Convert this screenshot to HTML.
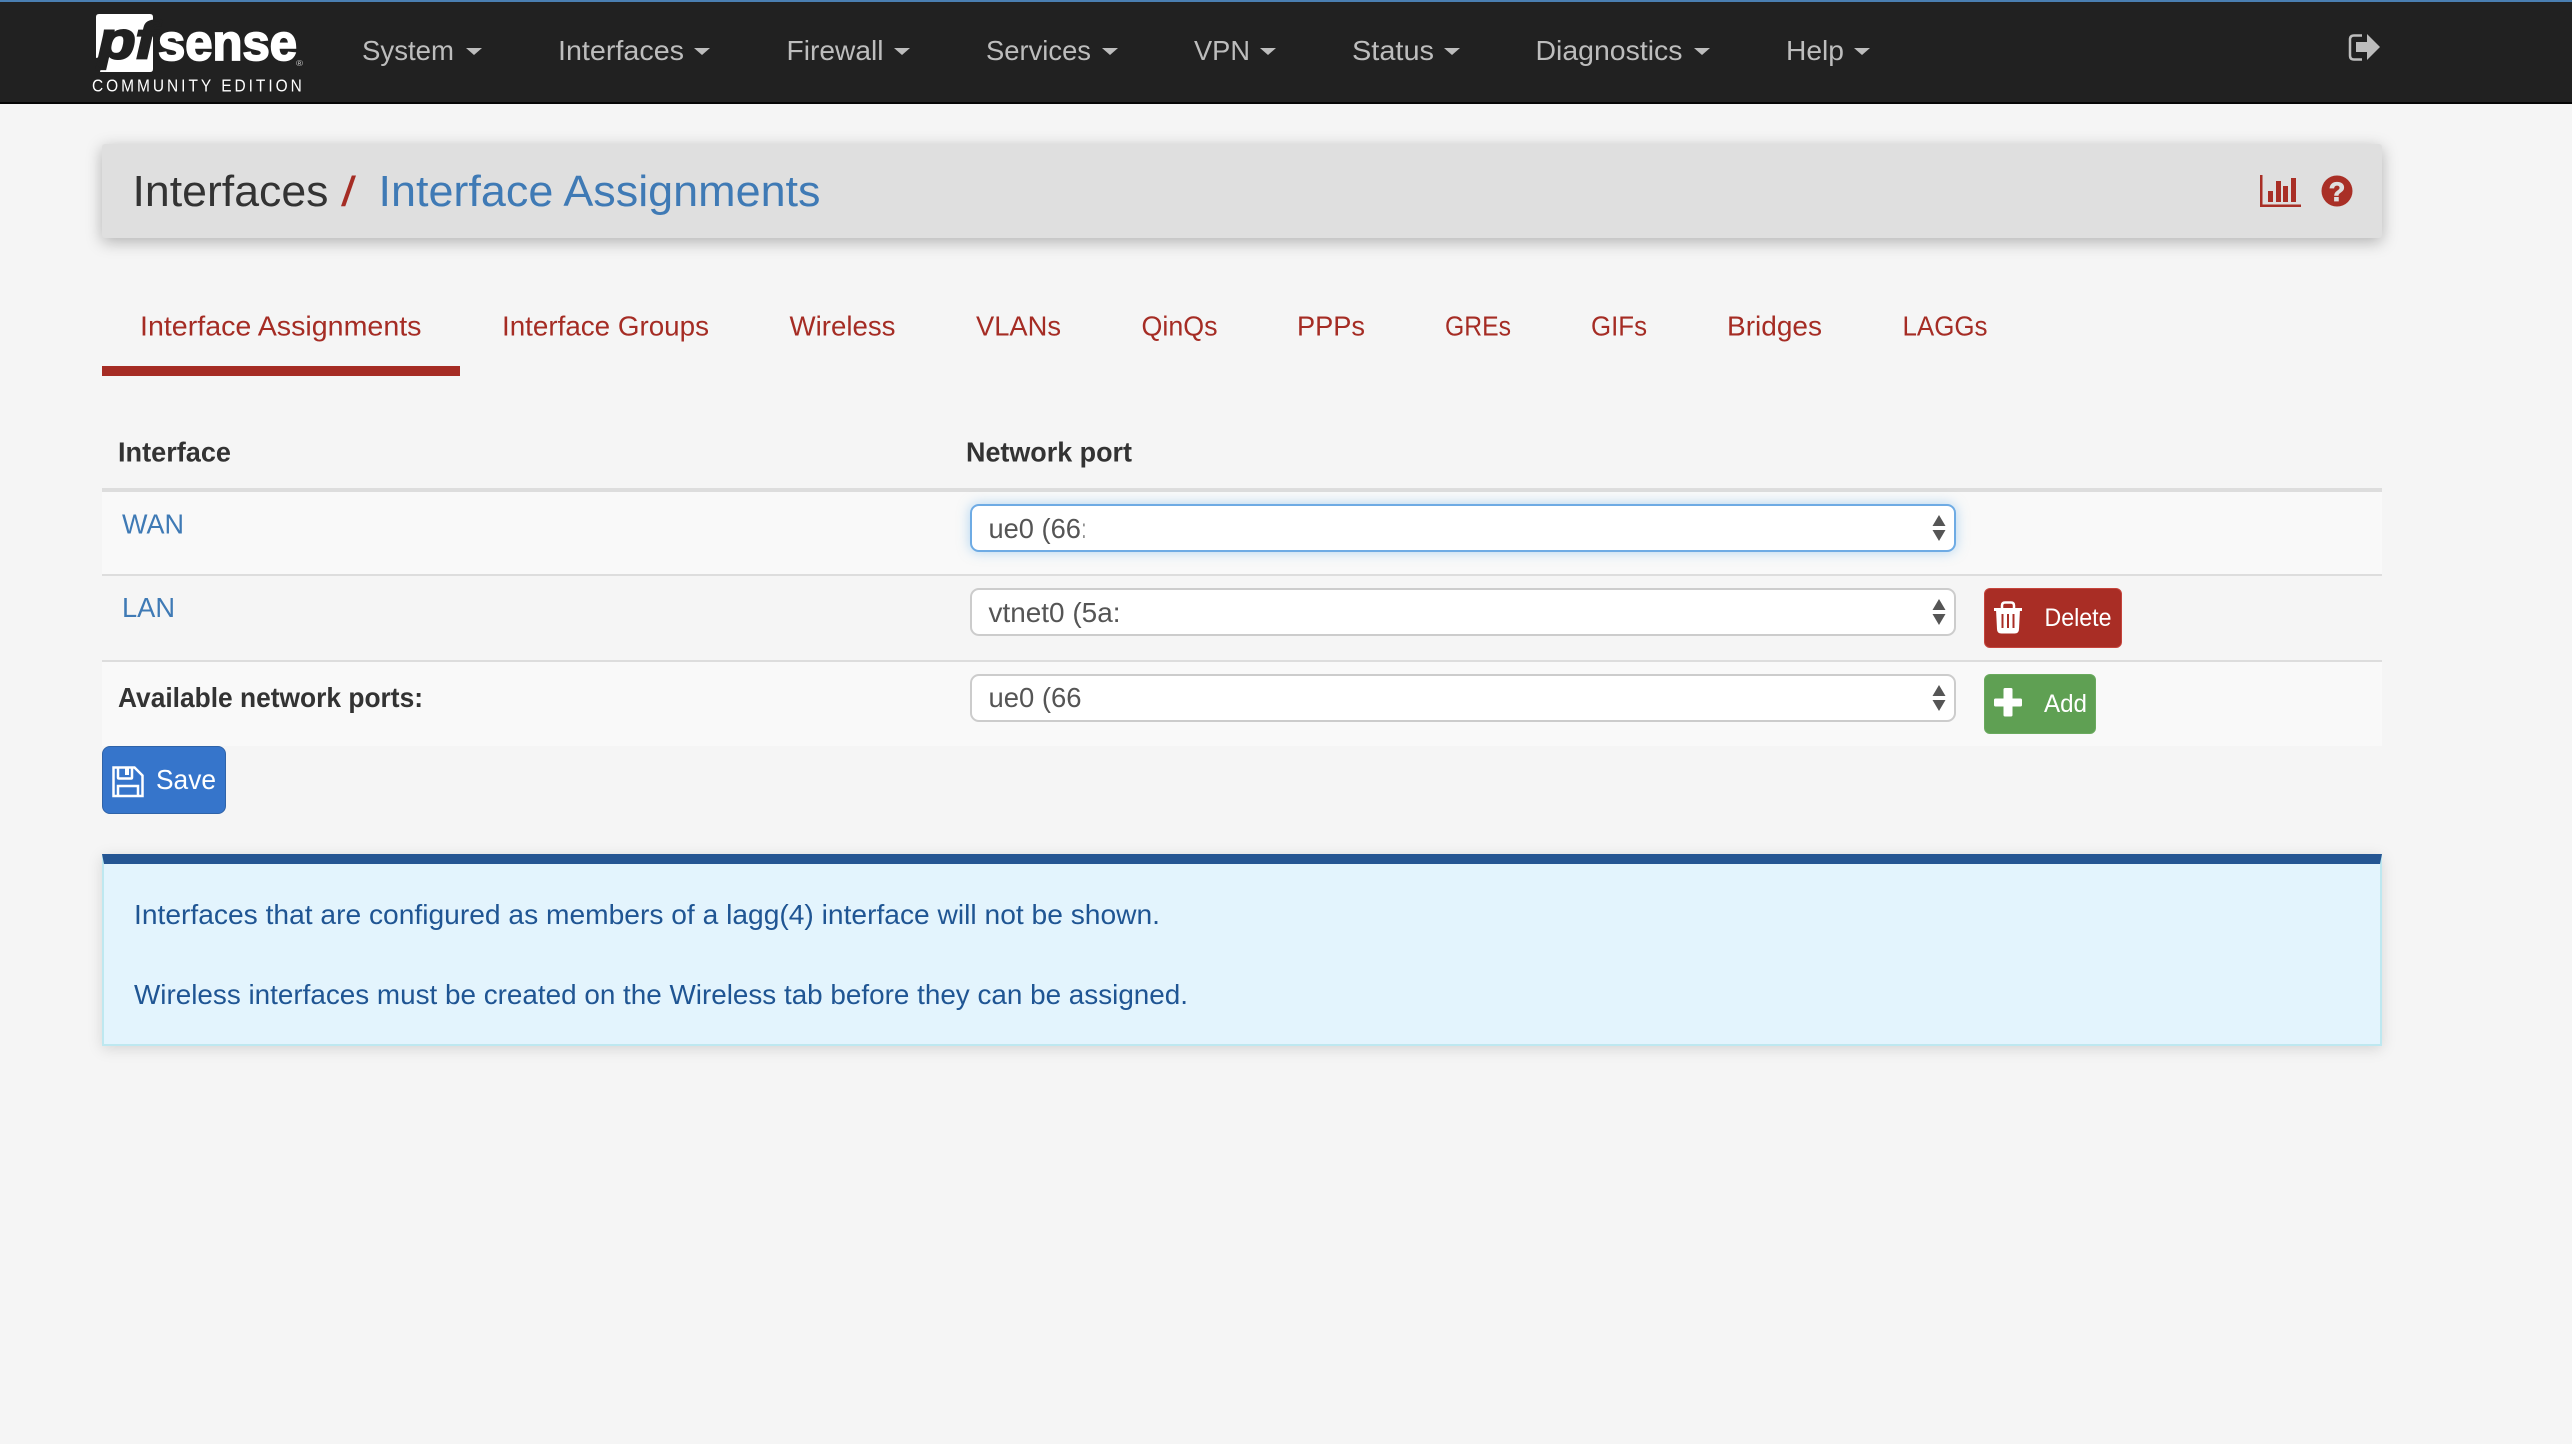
<!DOCTYPE html>
<html lang="en"><head><meta charset="utf-8"><title>Interfaces: Interface Assignments</title>
<style>
html,body{margin:0;padding:0;width:2572px;height:1444px;overflow:hidden;background:#f5f5f5}
body{position:relative;font-family:"Liberation Sans",sans-serif}
.b{position:absolute;box-sizing:border-box}
svg{position:absolute;left:0;top:0}
text{font-family:"Liberation Sans",sans-serif;font-size:28px}
</style></head><body>
<div class="b" style="left:0;top:0;width:2572px;height:104px;background:#212121;border-top:2px solid #4a7fb2;border-bottom:2px solid #050505"></div>
<div class="b" style="left:102px;top:144px;width:2280px;height:94px;background:#dfdfdf;border-radius:3px;box-shadow:0 4px 16px rgba(0,0,0,.28)"></div>
<div class="b" style="left:102px;top:366px;width:358px;height:10px;background:#a52c24"></div>
<div class="b" style="left:102px;top:488px;width:2280px;height:4px;background:#ddd"></div>
<div class="b" style="left:102px;top:492px;width:2280px;height:82px;background:#f9f9f9"></div>
<div class="b" style="left:102px;top:574px;width:2280px;height:2px;background:#ddd"></div>
<div class="b" style="left:102px;top:660px;width:2280px;height:2px;background:#ddd"></div>
<div class="b" style="left:102px;top:662px;width:2280px;height:84px;background:#f9f9f9"></div>
<div class="b" style="left:970px;top:504px;width:986px;height:48px;background:#fff;border:2px solid #6eabe4;border-radius:9px;box-shadow:0 0 12px rgba(102,175,233,.5)"></div>
<div class="b" style="left:970px;top:588px;width:986px;height:48px;background:#fff;border:2px solid #ccc;border-radius:9px"></div>
<div class="b" style="left:970px;top:674px;width:986px;height:48px;background:#fff;border:2px solid #ccc;border-radius:9px"></div>
<div class="b" style="left:1984px;top:588px;width:138px;height:60px;background:#a92d25;border:1px solid #c5443c;border-radius:6px"></div>
<div class="b" style="left:1984px;top:674px;width:112px;height:60px;background:#5fa053;border:1px solid #6aaa5e;border-radius:6px"></div>
<div class="b" style="left:102px;top:746px;width:124px;height:68px;background:#3675cb;border:1px solid #2f63a8;border-radius:8px"></div>
<div class="b" style="left:102px;top:854px;width:2280px;height:192px;background:#e3f4fd;border:2px solid #bee8f0;border-top:10px solid #255693;box-shadow:0 3px 14px rgba(0,0,0,.13)"></div>

<svg width="2572" height="1444" viewBox="0 0 2572 1444" xmlns="http://www.w3.org/2000/svg">
<!-- logo -->
<path d="M99 14H150Q153 14 153 17V69Q153 72 150 72H100L104 56L96 58V17Q96 14 99 14Z" fill="#fff"/>
<text x="98" y="58" textLength="58" lengthAdjust="spacingAndGlyphs" font-weight="700" font-style="italic" style="font-size:52px" fill="#212121" stroke="#212121" stroke-width="2.200">pf</text>
<text x="158" y="60" textLength="139" lengthAdjust="spacingAndGlyphs" font-weight="700" style="font-size:51px" fill="#fff" stroke="#fff" stroke-width="1.800">sense</text>
<text x="296" y="66" textLength="7" lengthAdjust="spacingAndGlyphs" style="font-size:8px" fill="#ccc">®</text>
<text transform="translate(92 91.500) scale(.86 1)" x="0" y="0" textLength="244" lengthAdjust="spacing" style="font-size:18px" fill="#fff">COMMUNITY EDITION</text>

<!-- nav -->
<g fill="#bdbdbd">
<text x="362" y="60" textLength="92" lengthAdjust="spacingAndGlyphs">System</text>
<text x="558" y="60" textLength="126" lengthAdjust="spacingAndGlyphs">Interfaces</text>
<text x="786.500" y="60" textLength="97" lengthAdjust="spacingAndGlyphs">Firewall</text>
<text x="986" y="60" textLength="105" lengthAdjust="spacingAndGlyphs">Services</text>
<text x="1194" y="60" textLength="56" lengthAdjust="spacingAndGlyphs">VPN</text>
<text x="1352" y="60" textLength="82" lengthAdjust="spacingAndGlyphs">Status</text>
<text x="1535.500" y="60" textLength="147" lengthAdjust="spacingAndGlyphs">Diagnostics</text>
<text x="1786" y="60" textLength="58" lengthAdjust="spacingAndGlyphs">Help</text>
<path d="M466 48h16l-8 7zM694 48h16l-8 7zM894 48h16l-8 7zM1102 48h16l-8 7zM1260 48h16l-8 7zM1444 48h16l-8 7zM1694 48h16l-8 7zM1854 48h16l-8 7z"/>
<path d="M2362 35.500h-8q-4 0-4 4v16q0 4 4 4h8" fill="none" stroke="#bdbdbd" stroke-width="2.500"/>
<path d="M2356 42h11v-8l13 13-13 13v-8h-11z"/>
</g>

<!-- breadcrumb -->
<text x="132.500" y="206" textLength="196" lengthAdjust="spacingAndGlyphs" style="font-size:44px" fill="#333">Interfaces</text>
<text x="341" y="206" textLength="15" lengthAdjust="spacingAndGlyphs" style="font-size:42px" fill="#a52c24">/</text>
<text x="378.500" y="206" textLength="442" lengthAdjust="spacingAndGlyphs" style="font-size:44px" fill="#3f7ab5">Interface Assignments</text>
<g fill="#a92f26">
<path d="M2260 175h2.500v29.500h38.500v2.500h-41z"/>
<rect x="2268" y="191" width="5" height="11"/><rect x="2276" y="181" width="5" height="21"/><rect x="2283" y="186" width="5" height="16"/><rect x="2291" y="178" width="5" height="24"/>
<circle cx="2337" cy="191" r="15.500"/>
</g>
<text x="2337" y="201" text-anchor="middle" font-weight="700" style="font-size:27px" fill="#dfdfdf" stroke="#dfdfdf" stroke-width=".8">?</text>

<!-- tabs -->
<g fill="#a52c24">
<text x="140" y="335.500" textLength="281.500" lengthAdjust="spacingAndGlyphs">Interface Assignments</text>
<text x="502" y="335.500" textLength="207" lengthAdjust="spacingAndGlyphs">Interface Groups</text>
<text x="789.500" y="335.500" textLength="106" lengthAdjust="spacingAndGlyphs">Wireless</text>
<text x="976" y="335.500" textLength="85" lengthAdjust="spacingAndGlyphs">VLANs</text>
<text x="1141.500" y="335.500" textLength="76" lengthAdjust="spacingAndGlyphs">QinQs</text>
<text x="1297" y="335.500" textLength="68" lengthAdjust="spacingAndGlyphs">PPPs</text>
<text x="1445" y="335.500" textLength="66" lengthAdjust="spacingAndGlyphs">GREs</text>
<text x="1591" y="335.500" textLength="56" lengthAdjust="spacingAndGlyphs">GIFs</text>
<text x="1727" y="335.500" textLength="95" lengthAdjust="spacingAndGlyphs">Bridges</text>
<text x="1902.500" y="335.500" textLength="85" lengthAdjust="spacingAndGlyphs">LAGGs</text>
</g>

<!-- table -->
<g fill="#333" font-weight="700">
<text x="118" y="461.500" textLength="113" lengthAdjust="spacingAndGlyphs">Interface</text>
<text x="966" y="461.500" textLength="166" lengthAdjust="spacingAndGlyphs">Network port</text>
<text x="118" y="707" textLength="305" lengthAdjust="spacingAndGlyphs">Available network ports:</text>
</g>
<g fill="#3f7ab5">
<text x="122" y="533.500" textLength="62" lengthAdjust="spacingAndGlyphs">WAN</text>
<text x="122" y="617" textLength="53" lengthAdjust="spacingAndGlyphs">LAN</text>
</g>
<g fill="#555">
<text x="988.500" y="538" textLength="100" lengthAdjust="spacingAndGlyphs">ue0 (66:</text>
<text x="988.500" y="622" textLength="132" lengthAdjust="spacingAndGlyphs">vtnet0 (5a:</text>
<text x="988.500" y="707" textLength="93" lengthAdjust="spacingAndGlyphs">ue0 (66</text>
</g>
<rect x="1084.500" y="515" width="10" height="30" fill="#fff"/>
<g fill="#555">
<path d="M1939 515l6.500 11h-13zM1939 541l6.500-11h-13z"/>
<path d="M1939 599l6.500 11h-13zM1939 625l6.500-11h-13z"/>
<path d="M1939 685l6.500 11h-13zM1939 711l6.500-11h-13z"/>
</g>

<!-- buttons -->
<g fill="none" stroke="#fff">
<path d="M1994 609.500h28" stroke-width="3"/>
<path d="M2002 608v-2.500q0-3 3-3h6q3 0 3 3v2.500" stroke-width="2.500"/>
<path d="M1997.500 609l1 20q0 3 3 3h13q3 0 3-3l1-20" stroke-width="3" fill="#fff"/>
</g>
<path d="M2002.500 614v14M2008 614v14M2013.500 614v14" stroke="#a92d25" stroke-width="2"/>
<text x="2044.500" y="626" textLength="67" lengthAdjust="spacingAndGlyphs" style="font-size:25px" fill="#fff">Delete</text>
<path d="M2005 688h6q1.500 0 1.500 1.500v9h8q1.500 0 1.500 1.500v5q0 1.500-1.500 1.500h-8v8.500q0 1.500-1.500 1.500h-6q-1.500 0-1.500-1.500v-8.500h-8q-1.500 0-1.500-1.500v-5q0-1.500 1.500-1.500h8v-9q0-1.500 1.500-1.500z" fill="#fff"/>
<text x="2044" y="712" textLength="43" lengthAdjust="spacingAndGlyphs" style="font-size:25px" fill="#fff">Add</text>

<!-- save -->
<g fill="none" stroke="#fff" stroke-width="2.500">
<path d="M113.500 767.500h21l8 8v20.500h-29z"/>
<path d="M118 768v9.500q0 1 1 1h12q1 0 1-1v-9.500"/>
<path d="M118 796v-10h20v10"/>
</g>
<rect x="125" y="768" width="4" height="7" fill="#fff"/>
<text x="156" y="789" textLength="60" lengthAdjust="spacingAndGlyphs" fill="#fff">Save</text>

<!-- alert -->
<g fill="#1f5593">
<text x="134" y="924" textLength="1026" lengthAdjust="spacingAndGlyphs">Interfaces that are configured as members of a lagg(4) interface will not be shown.</text>
<text x="134" y="1004" textLength="1054" lengthAdjust="spacingAndGlyphs">Wireless interfaces must be created on the Wireless tab before they can be assigned.</text>
</g>
</svg>
</body></html>
